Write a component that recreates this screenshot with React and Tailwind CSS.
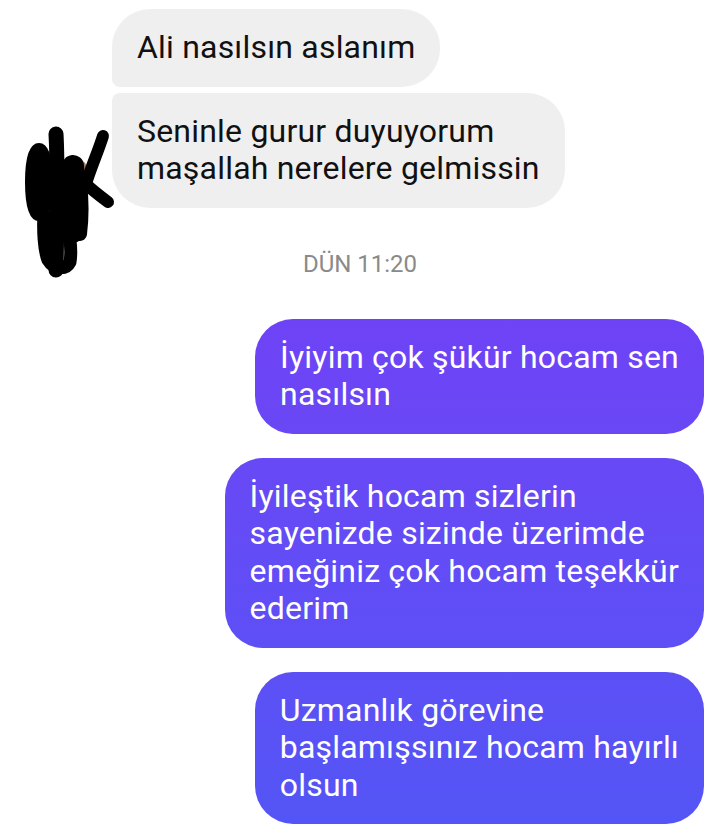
import React from 'react';

const incoming = [
  { lines: ['Ali nasılsın aslanım'], shape: 'rounded-[38px] rounded-bl-[8px]' },
  { lines: ['Seninle gurur duyuyorum', 'maşallah nerelere gelmissin'], shape: 'rounded-[38px] rounded-tl-[8px]' },
];

const outgoing = [
  ['İyiyim çok şükür hocam sen', 'nasılsın'],
  ['İyileştik hocam sizlerin', 'sayenizde sizinde üzerimde', 'emeğiniz çok hocam teşekkür', 'ederim'],
  ['Uzmanlık görevine', 'başlamışsınız hocam hayırlı', 'olsun'],
];

// marker scribble hiding the sender's avatar
const Scribble = () => (
  <svg
    className="absolute left-[20px] top-[101px]"
    width="100"
    height="170"
    viewBox="0 0 100 170"
    fill="none"
    stroke="#000"
    strokeLinecap="round"
    strokeLinejoin="round"
  >
    <ellipse cx="19" cy="72" rx="7" ry="32" strokeWidth="14" />
    <ellipse cx="62" cy="60" rx="5" ry="9" fill="#a87a5e" stroke="none" />
    <path d="M53 56 C55 78 54 100 53 122" strokeWidth="22" />
    <path d="M60 74 C62 90 62 108 60 124" strokeWidth="14" />
    <path d="M36 24 C38 60 37 110 36 160" strokeWidth="15" />
    <path d="M83 26 C78 42 70 60 66 74 C72 80 80 86 88 92" strokeWidth="12" />
    <path d="M24 104 C23 120 24 140 28 150 C34 160 46 160 50 152 C52 140 50 128 48 118" strokeWidth="13" />
  </svg>
);

export default function App() {
  return (
    <div className="min-h-screen bg-white pt-[9px] font-['Roboto','Liberation_Sans',sans-serif] text-[32px] leading-[37.5px] tracking-[0.2px]">
      {/* incoming group */}
      <div className="flex">
        <div className="relative w-[112px] shrink-0">
          <Scribble />
        </div>
        <div className="flex flex-col items-start gap-[6px]">
          {incoming.map((m, i) => (
            <div key={i} className={`bg-[#efefef] px-[25px] py-[20px] text-[#111] ${m.shape}`}>
              {m.lines.map((l) => (
                <div key={l} className="whitespace-nowrap">{l}</div>
              ))}
            </div>
          ))}
        </div>
      </div>

      <div className="mt-[43px] text-center text-[24px] leading-[26px] tracking-normal text-[#8a8a8a]">DÜN 11:20</div>

      {/* outgoing group */}
      <div className="mt-[42px] flex flex-col items-end gap-[24px] pr-[16px]">
        {outgoing.map((lines, i) => (
          <div
            key={i}
            className="rounded-[38px] bg-linear-to-b from-[#7c34f6] to-[#5355f5] bg-fixed px-[25px] py-[20px] text-white"
          >
            {lines.map((l) => (
              <div key={l} className="whitespace-nowrap">{l}</div>
            ))}
          </div>
        ))}
      </div>
    </div>
  );
}
